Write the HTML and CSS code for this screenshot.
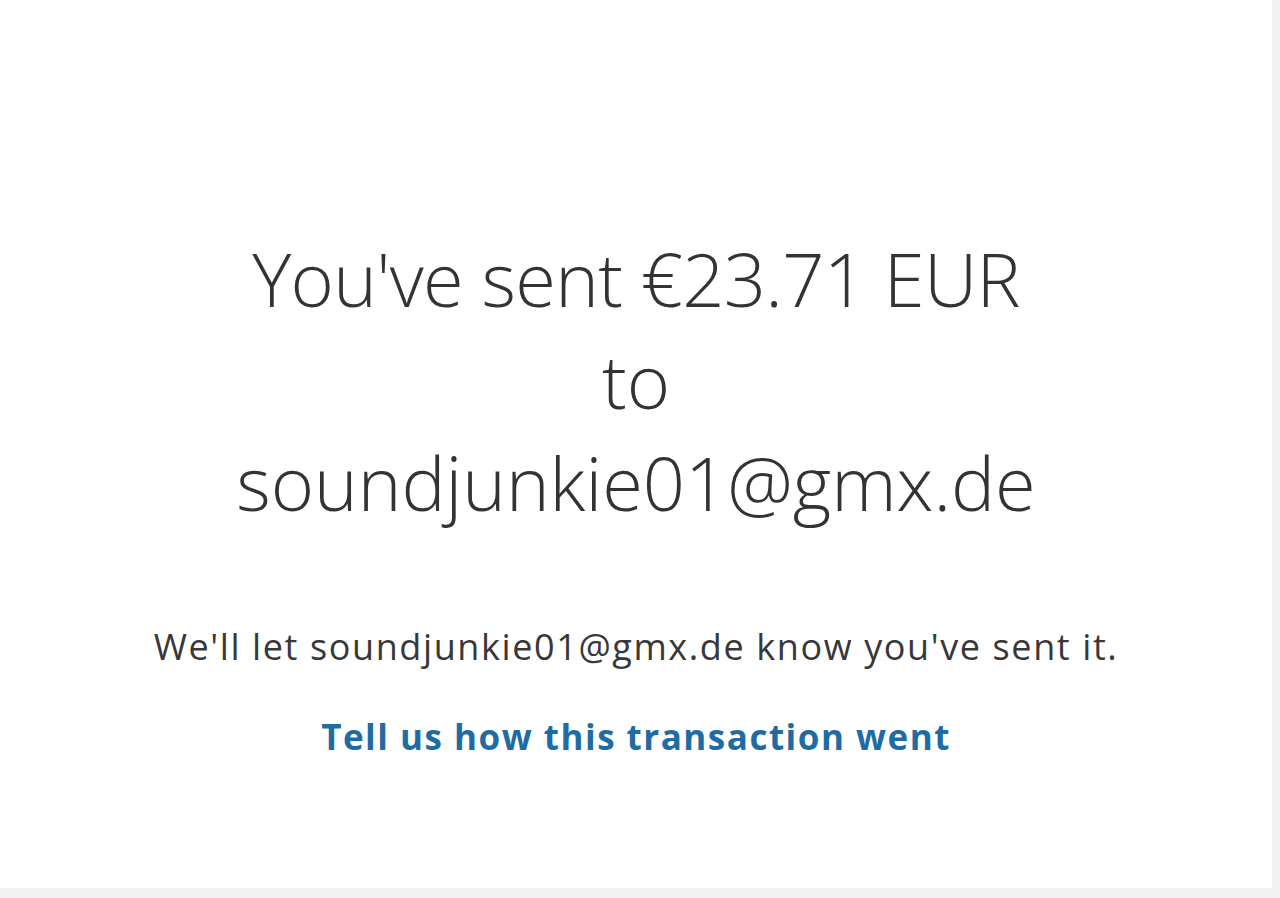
FILE: index.html
```html
<!DOCTYPE html>
<html lang="en">
    <head>
        <meta charset="UTF-8" />
        <meta name="viewport" content="width=device-width, initial-scale=1.0" />
        <title>Payment sent</title>
        <link rel="stylesheet" href="styles.css">
    </head>
    <body>
        <div class="panel">
            <h1 class="title"><span class="amount">You've sent €23.71 EUR</span><br />to<br />soundjunkie01@gmx.de</h1>
            <p class="note">We'll let soundjunkie01@gmx.de know you've sent it.</p>
            <a class="feedback" href="#">Tell us how this transaction went</a>
        </div>
    </body>
</html>
```

FILE: styles.css
```css
html, body {
    margin: 0;
    height: 100%;
}
body {
    background: #f1f1f4;
    font-family: "Open Sans", "Lato", sans-serif;
    color: #2c2e2f;
    overflow: hidden;
}
.panel {
    width: 1272px;
    height: 888px;
    background: #fff;
    display: flex;
    flex-direction: column;
    align-items: center;
    box-sizing: border-box;
    padding-top: 228px;
}
.title {
    margin: 0;
    font-weight: 300;
    font-size: 74px;
    line-height: 102px;
    text-align: center;
    color: #333;
}
.title .amount {
    letter-spacing: -0.7px;
}
.note {
    margin: 91px 0 0;
    font-size: 36px;
    line-height: 44px;
    letter-spacing: 1.6px;
    color: #383838;
}
.feedback {
    margin-top: 46px;
    font-size: 35px;
    line-height: 44px;
    font-weight: 700;
    letter-spacing: 1.5px;
    color: #1f6ca4;
    text-decoration: none;
}
```
